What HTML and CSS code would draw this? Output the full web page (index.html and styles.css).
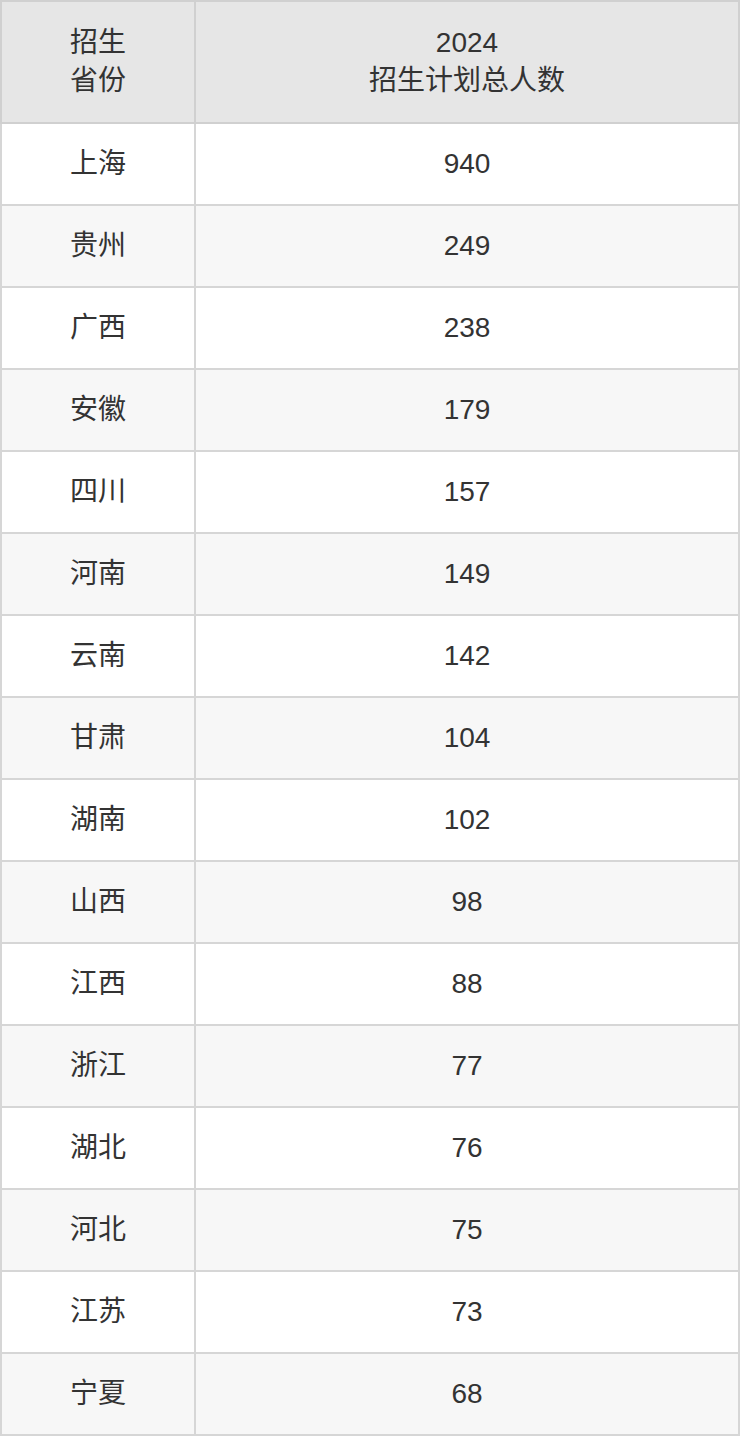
FILE: index.html
```html
<!DOCTYPE html>
<html lang="zh">
<head>
<meta charset="utf-8">
<link rel="stylesheet" href="styles.css">
</head>
<body>
<table class="plan">
  <thead>
    <tr><th class="prov">招生<br>省份</th><th class="num">2024<br>招生计划总人数</th></tr>
  </thead>
  <tbody>
    <tr><td>上海</td><td>940</td></tr>
    <tr><td>贵州</td><td>249</td></tr>
    <tr><td>广西</td><td>238</td></tr>
    <tr><td>安徽</td><td>179</td></tr>
    <tr><td>四川</td><td>157</td></tr>
    <tr><td>河南</td><td>149</td></tr>
    <tr><td>云南</td><td>142</td></tr>
    <tr><td>甘肃</td><td>104</td></tr>
    <tr><td>湖南</td><td>102</td></tr>
    <tr><td>山西</td><td>98</td></tr>
    <tr><td>江西</td><td>88</td></tr>
    <tr><td>浙江</td><td>77</td></tr>
    <tr><td>湖北</td><td>76</td></tr>
    <tr><td>河北</td><td>75</td></tr>
    <tr><td>江苏</td><td>73</td></tr>
    <tr><td>宁夏</td><td>68</td></tr>
  </tbody>
</table>
</body>
</html>
```
FILE: styles.css
```css
html, body {
  margin: 0;
  padding: 0;
  background: #ffffff;
}
.plan {
  width: 740px;
  border-collapse: collapse;
  table-layout: fixed;
  font-family: "Liberation Sans", "Noto Sans CJK SC", sans-serif;
  font-size: 28px;
  color: #333333;
}
.plan th, .plan td {
  border: 2px solid #d6d6d6;
  text-align: center;
  vertical-align: middle;
  padding: 0;
  font-weight: normal;
}
.plan th {
  background: #e6e6e6;
  height: 120px;
  line-height: 38px;
  border-color: #d0d0d0;
}
.plan th.prov {
  width: 192px;
}
.plan td {
  height: 80px;
  line-height: 34px;
}
.plan tbody tr:nth-child(even) td {
  background: #f7f7f7;
}
```
